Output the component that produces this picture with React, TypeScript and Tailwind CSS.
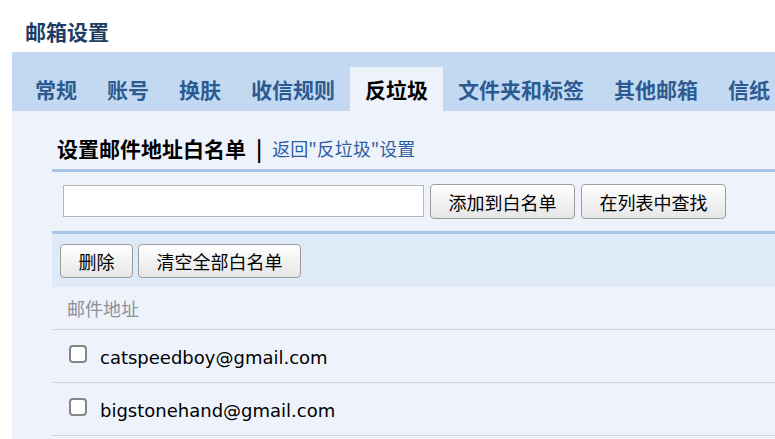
const tabs = ['常规', '账号', '换肤', '收信规则', '反垃圾', '文件夹和标签', '其他邮箱', '信纸'];
const active = '反垃圾';

const emails = ['catspeedboy@gmail.com', 'bigstonehand@gmail.com'];

function Btn({ label, w, h }: { label: string; w: string; h: string }) {
  return (
    <button
      className={`${w} ${h} flex shrink-0 items-center justify-center rounded-[4px] border border-[#9c9c9c] bg-gradient-to-b from-white to-[#e6e6e6] text-[18px] leading-none text-black`}
    >
      {label}
    </button>
  );
}

export default function App() {
  return (
    <div className="min-h-screen overflow-hidden bg-white font-['Noto_Sans_CJK_SC','Noto_Sans',sans-serif]">
      <h1 className="h-[52px] pl-[25px] pt-[21px] text-[21px] font-bold leading-[21px] text-[#1d3d64]">
        邮箱设置
      </h1>

      <div className="ml-[12px] min-h-[387px] bg-[#eef3fb]">
        {/* tab bar */}
        <nav className="flex h-[59px] overflow-hidden bg-[#c3d9f2] pl-[8px] pt-[15px]">
          {tabs.map((t) => (
            <div
              key={t}
              className={
                t === active
                  ? 'flex h-[44px] shrink-0 items-center whitespace-nowrap bg-[#eef3fb] px-[15px] text-[21px] font-bold leading-none text-black'
                  : 'flex h-[44px] shrink-0 items-center whitespace-nowrap px-[15px] text-[21px] font-bold leading-none text-[#2d5b91]'
              }
            >
              {t}
            </div>
          ))}
        </nav>

        <div className="pl-[40px]">
          {/* heading */}
          <div className="flex h-[61px] items-start whitespace-nowrap border-b-[3px] border-[#a9c5e6] pl-[5px] pt-[27px] leading-[21px]">
            <span className="text-[21px] font-bold text-black">设置邮件地址白名单</span>
            <span className="ml-[10px] text-[21px] font-bold text-black">|</span>
            <span className="ml-[10px] text-[18px] text-[#2e5f9f]">返回"反垃圾"设置</span>
          </div>

          {/* add row */}
          <div className="flex h-[62px] items-start gap-[6px] border-b-[3px] border-[#a9c5e6] pl-[11px] pt-[12px]">
            <input className="mt-[1px] h-[32px] w-[361px] shrink-0 border border-[#b5b5b5] bg-white px-1 outline-none" />
            <Btn label="添加到白名单" w="w-[145px]" h="h-[35px]" />
            <Btn label="在列表中查找" w="w-[145px]" h="h-[35px]" />
          </div>

          {/* toolbar */}
          <div className="flex h-[53px] items-center gap-[5px] bg-[#dfeaf8] pl-[8px]">
            <Btn label="删除" w="w-[73px]" h="h-[34px]" />
            <Btn label="清空全部白名单" w="w-[163px]" h="h-[34px]" />
          </div>

          {/* list */}
          <div className="flex h-[43px] items-center border-b border-[#cad4e0] pl-[15px] text-[18px] leading-none text-[#8b9099]">
            邮件地址
          </div>
          {emails.map((e) => (
            <div key={e} className="flex h-[53px] items-center border-b border-[#cad4e0] pl-[17px]">
              <span className="-mt-[4px] h-[18px] w-[18px] shrink-0 rounded-[4px] border-2 border-[#858585] bg-white" />
              <span className="ml-[13px] pt-[3px] font-['DejaVu_Sans',sans-serif] text-[18px] leading-none text-black">{e}</span>
            </div>
          ))}
        </div>
      </div>
    </div>
  );
}
